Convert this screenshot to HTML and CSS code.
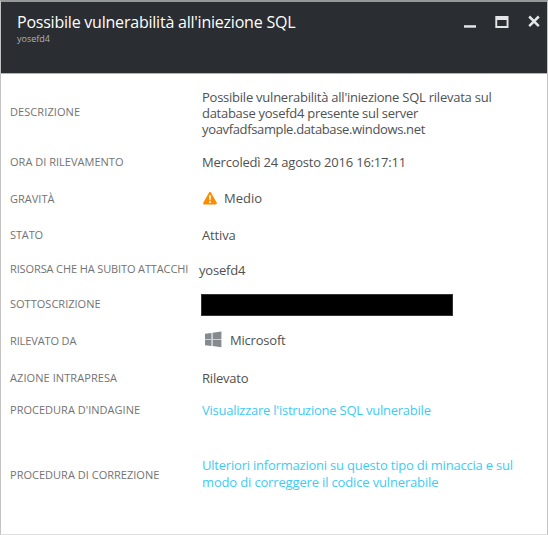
FILE: index.html
```html
<!DOCTYPE html>
<html lang="it">
<head>
<meta charset="utf-8">
<title>Possibile vulnerabilità all'iniezione SQL</title>
<link rel="stylesheet" href="styles.css">
</head>
<body>
<section class="blade">
  <header class="header">
    <div class="heading">
      <h1 class="title">Possibile vulnerabilità all'iniezione SQL</h1>
      <p class="subtitle">yosefd4</p>
    </div>
    <div class="controls">
      <svg width="12" height="14" viewBox="0 0 12 14"><path d="M0 10.2h12v2.5H0z" fill="#e3e5e7"/></svg>
      <svg width="14" height="14" viewBox="0 0 14 14"><path fill-rule="evenodd" d="M0.3 1h13.2v12H0.3zM2.2 5v6h9.4V5z" fill="#e3e5e7"/></svg>
      <svg width="12" height="14" viewBox="0 0 12 14"><path d="M1.2 1.5l9.6 9.6M10.8 1.5l-9.6 9.6" stroke="#e3e5e7" stroke-width="2.5" fill="none"/></svg>
    </div>
  </header>
  <dl class="details">
    <div class="row description"><dt class="s10">Descrizione</dt><dd><span class="line t23">Possibile vulnerabilità all'iniezione SQL rilevata sul</span><span class="line t28">database yosefd4 presente sul server</span><span class="line t32">yoavfadfsample.database.windows.net</span></dd></div>
    <div class="row time"><dt class="s0">Ora di rilevamento</dt><dd class="t20">Mercoledì 24 agosto 2016 16:17:11</dd></div>
    <div class="row severity"><dt class="s0">Gravità</dt><dd class="with-icon"><svg width="16" height="14" viewBox="0 0 16 14"><path d="M8 2L13.8 12.4H2.2z" fill="#ff8c00" stroke="#ff8c00" stroke-width="2.2" stroke-linejoin="round"/><path d="M7 4.2h2l-.4 5H7.4zM7.1 10.2h1.8V12H7.1z" fill="#fff"/></svg><span>Medio</span></dd></div>
    <div class="row status"><dt class="sn">Stato</dt><dd class="t14">Attiva</dd></div>
    <div class="row resource"><dt class="sn">Risorsa che ha subito attacchi</dt><dd class="t20">yosefd4</dd></div>
    <div class="row subscription"><dt class="s0">Sottoscrizione</dt><dd><span class="redacted"></span></dd></div>
    <div class="row source"><dt class="sn">Rilevato da</dt><dd class="with-icon"><svg width="17" height="17" viewBox="0 0 17 17"><path d="M0 2.8L6.6 2v6H0zM7.6 1.8L16.4.5V8H7.6zM0 9h6.6v6L0 14.2zM7.6 9h8.8v7.2l-8.8-1.1z" fill="#858a8e"/><path d="M0 8h16.4v1H0zM6.6 2h1v13h-1z" fill="#ced1d3"/></svg><span class="t20">Microsoft</span></dd></div>
    <div class="row action"><dt class="s10">Azione intrapresa</dt><dd class="t20">Rilevato</dd></div>
    <div class="row inquiry"><dt class="s0">Procedura d'indagine</dt><dd><a class="t23">Visualizzare l'istruzione SQL vulnerabile</a></dd></div>
    <div class="row fix"><dt class="s0">Procedura di correzione</dt><dd><a class="line t20">Ulteriori informazioni su questo tipo di minaccia e sul</a><a class="line t14">modo di correggere il codice vulnerabile</a></dd></div>
  </dl>
</section>
</body>
</html>
```
FILE: styles.css
```css
* { box-sizing: border-box; }
body { margin: 0; background: #fff; font-family: "Open Sans", "Noto Sans", sans-serif; }
.blade { height: 535px; border: 1px solid #c3c3c3; border-bottom-color: #dedede; border-top: 2px solid #969899; overflow: hidden; }
.header { height: 72px; padding: 9px 7px 0 16px; display: flex; justify-content: space-between; background: #2a2d32; border-bottom: 1px solid #b0b2b4; }
.title { margin: 0; font-size: 16px; line-height: 22px; font-weight: 400; letter-spacing: -.22px; color: #fff; white-space: nowrap; }
.subtitle { margin: 0; font-size: 9px; line-height: 12px; color: #aeb1b4; }
.controls { display: flex; gap: 19px; padding-top: 4px; }
.details { margin: 0; }
.row { display: grid; grid-template-columns: 192px 1fr; align-items: center; padding-left: 9px; }
dt { font-size: 11px; line-height: 14px; color: #737373; text-transform: uppercase; white-space: nowrap; }
dd { margin: 0; font-size: 13px; line-height: 16px; color: #515151; white-space: nowrap; }
dd a { color: #3ecbf3; }
.line { display: block; }
.description { height: 78px; margin-bottom: -1px; }
.description dt { margin-top: -2px; }
.time { height: 21px; }
.severity { height: 51px; }
.status { height: 23px; }
.resource { height: 46px; grid-template-columns: 189px 1fr; }
.resource dd { padding-top: 2px; }
.subscription { height: 23px; }
.source { height: 50px; }
.source dt, .severity dt { padding-top: 2px; }
.action { height: 25px; }
.inquiry { height: 40px; }
.fix { height: 86px; }
.fix dt { padding-top: 3px; }
.fix dd { line-height: 17px; padding-top: 2px; }
.with-icon { display: flex; align-items: center; }
.severity svg { margin-right: 6px; }
.source svg { margin: -2px 8px 0 3px; }
.redacted { display: block; width: 252px; height: 22px; margin-left: -1px; background: #000; border: 1px solid #333; transform: translateY(1px); }
.s10 { letter-spacing: .08px; }
.s0 { letter-spacing: .015px; }
.sn { letter-spacing: -.12px; }
.t14 { letter-spacing: -.155px; }
.t20 { letter-spacing: -.21px; }
.time .t20 { letter-spacing: -.195px; }
.t23 { letter-spacing: -.24px; }
.t28 { letter-spacing: -.28px; }
.t32 { letter-spacing: -.35px; }
```
